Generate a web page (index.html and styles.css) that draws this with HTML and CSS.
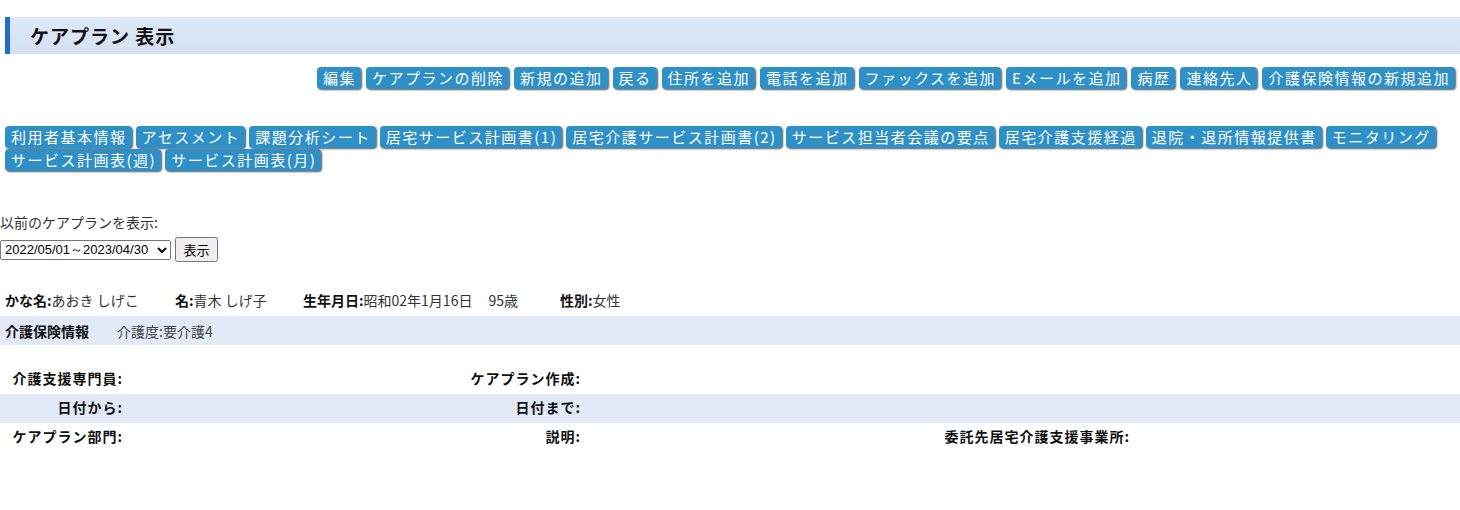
FILE: index.html
```html
<!DOCTYPE html>
<html lang="ja">
<head>
    <meta charset="UTF-8">
    <title>ケアプラン 表示</title>
    <link rel="stylesheet" href="styles.css">
</head>
<body>

    <h2 class="page-title">ケアプラン 表示</h2>

    <div class="actions">
        <a class="btn">編集</a>
        <a class="btn">ケアプランの削除</a>
        <a class="btn">新規の追加</a>
        <a class="btn">戻る</a>
        <a class="btn">住所を追加</a>
        <a class="btn">電話を追加</a>
        <a class="btn">ファックスを追加</a>
        <a class="btn">Eメールを追加</a>
        <a class="btn">病歴</a>
        <a class="btn">連絡先人</a>
        <a class="btn">介護保険情報の新規追加</a>
    </div>

    <div class="tabs">
        <a class="btn">利用者基本情報</a>
        <a class="btn">アセスメント</a>
        <a class="btn">課題分析シート</a>
        <a class="btn">居宅サービス計画書(1)</a>
        <a class="btn">居宅介護サービス計画書(2)</a>
        <a class="btn">サービス担当者会議の要点</a>
        <a class="btn">居宅介護支援経過</a>
        <a class="btn">退院・退所情報提供書</a>
        <a class="btn">モニタリング</a>
        <a class="btn">サービス計画表(週)</a>
        <a class="btn">サービス計画表(月)</a>
    </div>

    <div class="history">
        <p class="history-label">以前のケアプランを表示:</p>
        <div class="history-form">
            <select>
                <option>2022/05/01～2023/04/30</option>
            </select>
            <button>表示</button>
        </div>
    </div>

    <div class="profile">
        <span class="cell kana"><b>かな名:</b>あおき しげこ</span>
        <span class="cell name"><b>名:</b>青木 しげ子</span>
        <span class="cell birth"><b>生年月日:</b>昭和02年1月16日<span class="age">95歳</span></span>
        <span class="cell"><b>性別:</b>女性</span>
    </div>
    <div class="insurance">
        <b>介護保険情報</b>
        <span>介護度:要介護4</span>
    </div>

    <div class="plan">
        <div class="plan-row">
            <span class="lbl">介護支援専門員:</span><span></span>
            <span class="lbl">ケアプラン作成:</span><span></span>
            <span></span><span></span>
        </div>
        <div class="plan-row alt">
            <span class="lbl">日付から:</span><span></span>
            <span class="lbl">日付まで:</span><span></span>
            <span></span><span></span>
        </div>
        <div class="plan-row">
            <span class="lbl">ケアプラン部門:</span><span></span>
            <span class="lbl">説明:</span><span></span>
            <span class="lbl">委託先居宅介護支援事業所:</span><span></span>
        </div>
    </div>

</body>
</html>
```

FILE: styles.css
```css
body { margin: 0; font-family: "Noto Sans CJK JP", "Liberation Sans", sans-serif; font-size: 14px; color: #333; background: #fff; }

.page-title { margin: 17px 0 0 5px; height: 37px; line-height: 37px; padding-left: 20px; border-left: 5px solid #1f6fcf; background: linear-gradient(#dde9f8, #d5e0f1); font-size: 19px; letter-spacing: 1px; color: #111; }

.btn { display: inline-block; height: 22px; line-height: 22px; padding: 0 5px 0 6px; background: #2f90c8; color: #fff; font-size: 15px; letter-spacing: 1.5px; border-radius: 4px; box-shadow: 1px 1px 2px rgba(0, 0, 0, 0.65); white-space: nowrap; cursor: pointer; }

.actions { display: flex; justify-content: flex-end; gap: 5px; margin-top: 13px; padding: 0 5px; }
.tabs { display: flex; flex-wrap: wrap; gap: 1px 4px; margin-top: 37px; padding: 0 5px; }

.history { margin-top: 43px; }
.history-label { margin: 0; line-height: 16px; color: #333; }
.history-form { display: flex; align-items: center; gap: 4px; margin-top: 7px; }
.history-form select { font-family: "Liberation Sans", sans-serif; font-size: 13px; height: 20px; width: 171px; padding: 0; color: #000; }
.history-form button { font-family: "Noto Sans CJK JP", sans-serif; font-size: 13px; height: 25px; width: 43px; padding: 0; line-height: 1; }

.profile { display: flex; margin-top: 25px; height: 29px; align-items: center; padding: 0 0 3px 5px; box-sizing: border-box; }
.profile b { color: #111; }
.cell.kana { width: 170px; }
.cell.name { width: 128px; }
.cell.birth { width: 257px; }
.age { margin-left: 16px; }

.insurance { display: flex; height: 29px; align-items: center; padding-left: 5px; background: #e3eaf7; gap: 28px; }
.insurance b { color: #111; }
.insurance span { color: #444; }

.plan { margin-top: 20px; }
.plan-row { display: grid; grid-template-columns: 128px 330px 128px 349px 200px 1fr; height: 29px; align-items: center; }
.plan-row.alt { background: #e3eaf7; }
.lbl { text-align: right; padding: 0 5px 3px 0; font-weight: bold; color: #111; letter-spacing: 1px; white-space: nowrap; }
```
